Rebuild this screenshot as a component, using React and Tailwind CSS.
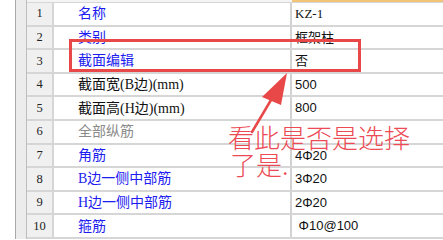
const rows = [
  { n: 1, name: "名称", value: "KZ-1", tone: "blue", serif: true },
  { n: 2, name: "类别", value: "框架柱", tone: "blue" },
  { n: 3, name: "截面编辑", value: "否", tone: "blue" },
  { n: 4, name: "截面宽(B边)(mm)", value: "500", tone: "black" },
  { n: 5, name: "截面高(H边)(mm)", value: "800", tone: "black" },
  { n: 6, name: "全部纵筋", value: "", tone: "gray" },
  { n: 7, name: "角筋", value: "4Φ20", tone: "blue" },
  { n: 8, name: "B边一侧中部筋", value: "3Φ20", tone: "blue" },
  { n: 9, name: "H边一侧中部筋", value: "2Φ20", tone: "blue" },
  { n: 10, name: "箍筋", value: " Φ10@100", tone: "blue" },
];

const toneClass = {
  blue: "text-[#1c1cf0]",
  black: "text-[#111]",
  gray: "text-[#8a8a8a]",
};

function Row({ row }) {
  return (
    <div className="flex h-[23.6px] border-b-2 border-[#d6d6d6]">
      <div className="w-[27px] shrink-0 bg-[#f0f0f0] border-r-2 border-[#d6d6d6] flex items-center justify-center text-[12.5px] text-[#222]">
        {row.n}
      </div>
      <div className={`w-[238px] shrink-0 border-r-2 border-[#d2d2d2] flex items-center pl-[24px] text-[14px] ${toneClass[row.tone]}`}>
        {row.name}
      </div>
      <div
        className="flex-1 flex items-center pl-[3px] text-[13px] text-[#111] whitespace-pre"
        style={row.serif ? undefined : { fontFamily: '"Liberation Sans", "Noto Sans CJK SC", sans-serif' }}
      >
        {row.value}
      </div>
    </div>
  );
}

export default function App() {
  return (
    <div
      className="relative w-[443px] h-[239px] overflow-hidden bg-white flex"
      style={{ fontFamily: '"Liberation Serif", "Noto Sans CJK SC", serif' }}
    >
      {/* left gutter */}
      <div className="w-[15px] shrink-0 bg-white" />
      <div className="w-px shrink-0 bg-[#a9a9a9]" />
      <div className="w-[10px] shrink-0 bg-[#ececec]" />
      <div className="w-px shrink-0 bg-[#bdbdbd]" />

      {/* property grid */}
      <div className="flex-1 flex flex-col">
        <div className="flex h-[3px] border-b border-[#d6d6d6]">
          <div className="w-[265px] shrink-0 bg-[#f4f4f4]" />
          <div className="flex-1 bg-[#f2c477]" />
        </div>
        {rows.map((r) => (
          <Row key={r.n} row={r} />
        ))}
      </div>

      {/* annotation: box */}
      <div className="absolute left-[69px] top-[39px] w-[292px] h-[33px] border-[3px] border-[#e84848]" />

      {/* annotation: arrow */}
      <svg className="absolute left-0 top-0" width="443" height="239" viewBox="0 0 443 239">
        <line x1="252" y1="132" x2="271" y2="100" stroke="#e84848" strokeWidth="2.5" strokeLinecap="round" />
        <polygon points="287,73 262,97 281,105" fill="#e84848" />
      </svg>

      {/* annotation: note */}
      <div
        className="absolute left-[228px] top-[123px] text-[26px] leading-[27px] text-[#ec4a55] font-light"
        style={{ fontFamily: '"Noto Sans CJK SC", sans-serif' }}
      >
        <div>看此是否是选择</div>
        <div className="pl-[2px]">了是.</div>
      </div>
    </div>
  );
}
